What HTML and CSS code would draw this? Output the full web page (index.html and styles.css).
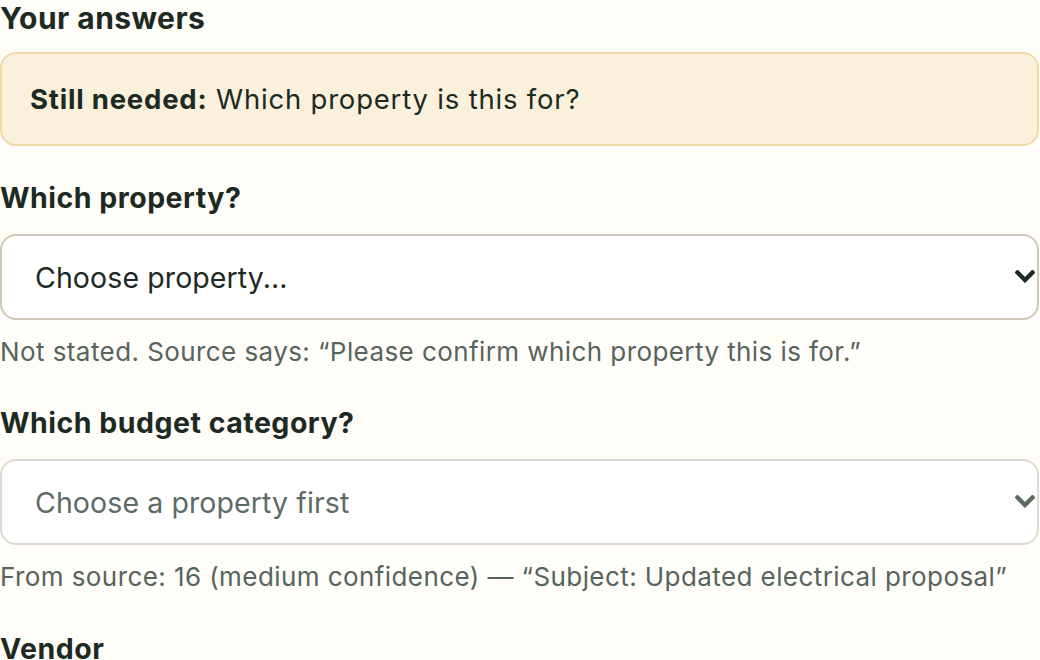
FILE: index.html
```html
<!DOCTYPE html>
<html lang="en">
<head>
<meta charset="utf-8">
<title>Your answers</title>
<link rel="stylesheet" href="styles.css">
</head>
<body>
<section class="answers">
  <h2 class="answers-title">Your answers</h2>
  <div class="callout"><strong>Still needed:</strong> Which property is this for?</div>

  <div class="field field-first">
    <label class="field-label" for="property">Which property?</label>
    <div class="select-wrap">
      <select id="property" class="select">
        <option>Choose property...</option>
      </select>
      <svg class="chevron" width="20" height="13" viewBox="0 0 20 13" aria-hidden="true"><polyline points="2.5,2.5 10,10 17.5,2.5" fill="none" stroke="currentColor" stroke-width="4.4" stroke-linecap="square" stroke-linejoin="miter"/></svg>
    </div>
    <p class="help">Not stated. Source says: “Please confirm which property this is for.”</p>
  </div>

  <div class="field">
    <label class="field-label" for="category">Which budget category?</label>
    <div class="select-wrap is-disabled">
      <select id="category" class="select" disabled>
        <option>Choose a property first</option>
      </select>
      <svg class="chevron" width="20" height="13" viewBox="0 0 20 13" aria-hidden="true"><polyline points="2.5,2.5 10,10 17.5,2.5" fill="none" stroke="currentColor" stroke-width="4.4" stroke-linecap="square" stroke-linejoin="miter"/></svg>
    </div>
    <p class="help">From source: 16 (medium confidence) — “Subject: Updated electrical proposal”</p>
  </div>

  <div class="field">
    <label class="field-label" for="vendor">Vendor</label>
  </div>
</section>
</body>
</html>
```

FILE: styles.css
```css
* { box-sizing: border-box; }

html, body {
  margin: 0;
  padding: 0;
  background: #fffdf8;
}

body {
  font-family: Inter, "Noto Sans", "Liberation Sans", sans-serif;
  color: #1c2a23;
}

.answers {
  width: 1039px;
  display: flex;
  flex-direction: column;
}

.answers-title {
  margin: 0 0 16px;
  font-size: 30px;
  line-height: 36px;
  font-weight: 700;
  letter-spacing: 0.45px;
}

.callout {
  background: #fbf0dc;
  border: 2px solid #f0d9a8;
  border-radius: 16px;
  padding: 25px 28px;
  font-size: 27.5px;
  line-height: 40px;
  margin-bottom: 34px;
  letter-spacing: 0.8px;
}

.callout strong { font-weight: 700; }

.field {
  display: flex;
  flex-direction: column;
  margin-bottom: 36px;
}

.field-first { margin-bottom: 35px; }

.field-label {
  font-size: 28.5px;
  line-height: 36px;
  font-weight: 700;
  margin-bottom: 18px;
  letter-spacing: 0.5px;
}

.select-wrap {
  position: relative;
  display: flex;
}

.select {
  appearance: none;
  -webkit-appearance: none;
  width: 100%;
  height: 86px;
  padding: 0 60px 0 33px;
  background: #ffffff;
  border: 2px solid #cfc8b8;
  border-radius: 16px;
  font-family: inherit;
  font-size: 28.5px;
  letter-spacing: 0.1px;
  color: #1c2a23;
  outline: none;
}

.select:disabled {
  border-color: #dedacf;
  color: #5d6b64;
  opacity: 1;
}

.chevron {
  position: absolute;
  right: 4px;
  top: 50%;
  margin-top: -7px;
  color: #1c2a23;
  pointer-events: none;
}

.is-disabled .chevron { color: #5d6b64; }

.help {
  margin: 14px 0 0;
  font-size: 26px;
  line-height: 36px;
  color: #56645d;
  letter-spacing: 0.42px;
}
```
